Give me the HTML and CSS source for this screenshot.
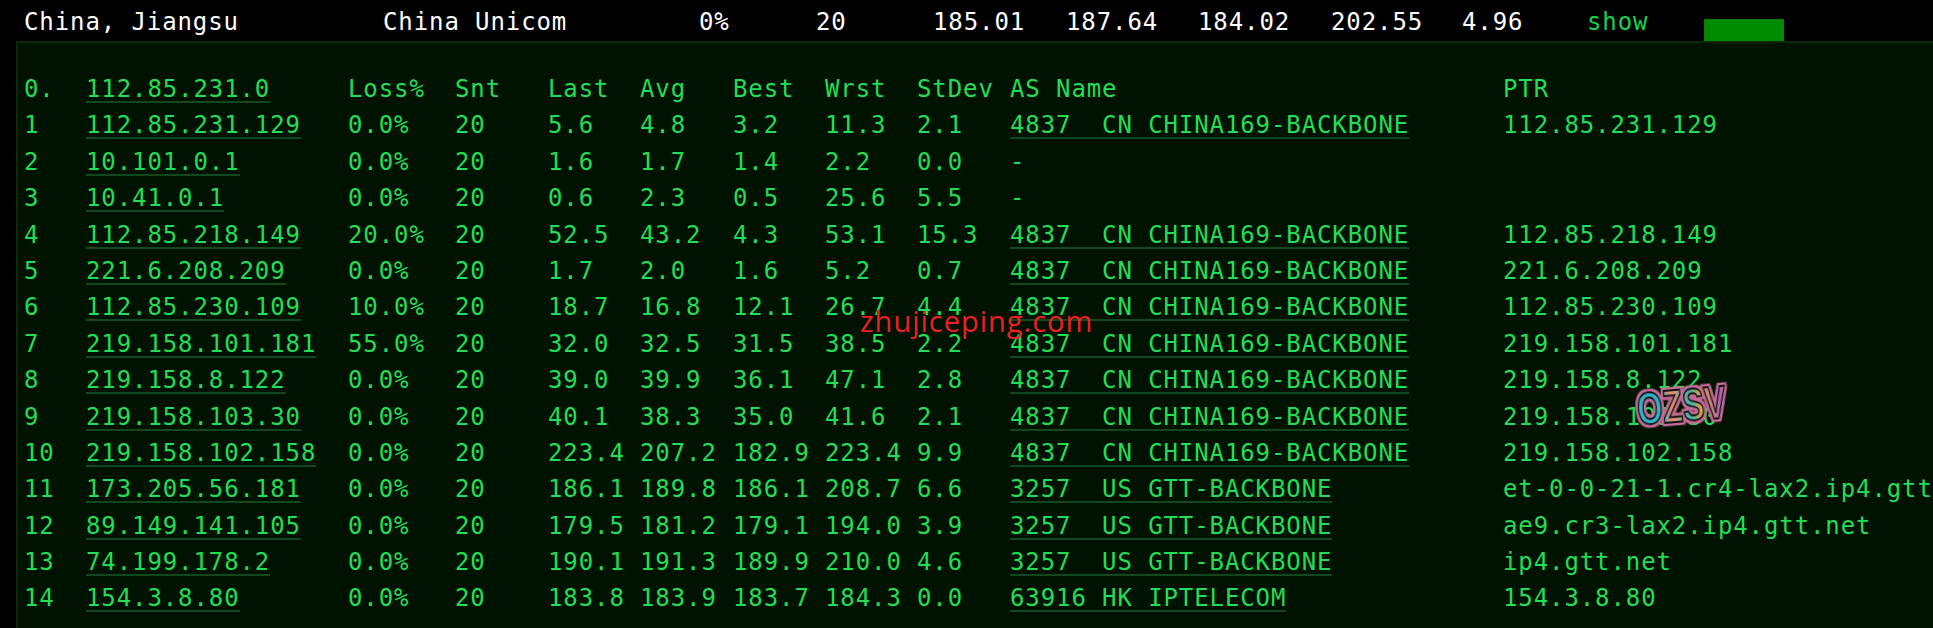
FILE: index.html
```html
<!DOCTYPE html>
<html lang="en">
<head>
<meta charset="utf-8">
<title>MTR trace</title>
<link rel="stylesheet" href="styles.css">
</head>
<body>
<div class="summary">
  <span>China, Jiangsu</span><span>China Unicom</span><span>0%</span><span>20</span><span>185.01</span><span>187.64</span><span>184.02</span><span>202.55</span><span>4.96</span><span class="show">show</span><span class="bar"></span>
</div>
<main class="panel">
  <div class="row"><span>0.</span><a>112.85.231.0</a><span>Loss%</span><span>Snt</span><span>Last</span><span>Avg</span><span>Best</span><span>Wrst</span><span>StDev</span><span>AS Name</span><span>PTR</span></div>
  <div class="row"><span>1</span><a>112.85.231.129</a><span>0.0%</span><span>20</span><span>5.6</span><span>4.8</span><span>3.2</span><span>11.3</span><span>2.1</span><a>4837&nbsp;&nbsp;CN CHINA169-BACKBONE</a><span>112.85.231.129</span></div>
  <div class="row"><span>2</span><a>10.101.0.1</a><span>0.0%</span><span>20</span><span>1.6</span><span>1.7</span><span>1.4</span><span>2.2</span><span>0.0</span><span>-</span><span></span></div>
  <div class="row"><span>3</span><a>10.41.0.1</a><span>0.0%</span><span>20</span><span>0.6</span><span>2.3</span><span>0.5</span><span>25.6</span><span>5.5</span><span>-</span><span></span></div>
  <div class="row"><span>4</span><a>112.85.218.149</a><span>20.0%</span><span>20</span><span>52.5</span><span>43.2</span><span>4.3</span><span>53.1</span><span>15.3</span><a>4837&nbsp;&nbsp;CN CHINA169-BACKBONE</a><span>112.85.218.149</span></div>
  <div class="row"><span>5</span><a>221.6.208.209</a><span>0.0%</span><span>20</span><span>1.7</span><span>2.0</span><span>1.6</span><span>5.2</span><span>0.7</span><a>4837&nbsp;&nbsp;CN CHINA169-BACKBONE</a><span>221.6.208.209</span></div>
  <div class="row"><span>6</span><a>112.85.230.109</a><span>10.0%</span><span>20</span><span>18.7</span><span>16.8</span><span>12.1</span><span>26.7</span><span>4.4</span><a>4837&nbsp;&nbsp;CN CHINA169-BACKBONE</a><span>112.85.230.109</span></div>
  <div class="row"><span>7</span><a>219.158.101.181</a><span>55.0%</span><span>20</span><span>32.0</span><span>32.5</span><span>31.5</span><span>38.5</span><span>2.2</span><a>4837&nbsp;&nbsp;CN CHINA169-BACKBONE</a><span>219.158.101.181</span></div>
  <div class="row"><span>8</span><a>219.158.8.122</a><span>0.0%</span><span>20</span><span>39.0</span><span>39.9</span><span>36.1</span><span>47.1</span><span>2.8</span><a>4837&nbsp;&nbsp;CN CHINA169-BACKBONE</a><span>219.158.8.122</span></div>
  <div class="row"><span>9</span><a>219.158.103.30</a><span>0.0%</span><span>20</span><span>40.1</span><span>38.3</span><span>35.0</span><span>41.6</span><span>2.1</span><a>4837&nbsp;&nbsp;CN CHINA169-BACKBONE</a><span>219.158.103.30</span></div>
  <div class="row"><span>10</span><a>219.158.102.158</a><span>0.0%</span><span>20</span><span>223.4</span><span>207.2</span><span>182.9</span><span>223.4</span><span>9.9</span><a>4837&nbsp;&nbsp;CN CHINA169-BACKBONE</a><span>219.158.102.158</span></div>
  <div class="row"><span>11</span><a>173.205.56.181</a><span>0.0%</span><span>20</span><span>186.1</span><span>189.8</span><span>186.1</span><span>208.7</span><span>6.6</span><a>3257&nbsp;&nbsp;US GTT-BACKBONE</a><span>et-0-0-21-1.cr4-lax2.ip4.gtt.net</span></div>
  <div class="row"><span>12</span><a>89.149.141.105</a><span>0.0%</span><span>20</span><span>179.5</span><span>181.2</span><span>179.1</span><span>194.0</span><span>3.9</span><a>3257&nbsp;&nbsp;US GTT-BACKBONE</a><span>ae9.cr3-lax2.ip4.gtt.net</span></div>
  <div class="row"><span>13</span><a>74.199.178.2</a><span>0.0%</span><span>20</span><span>190.1</span><span>191.3</span><span>189.9</span><span>210.0</span><span>4.6</span><a>3257&nbsp;&nbsp;US GTT-BACKBONE</a><span>ip4.gtt.net</span></div>
  <div class="row"><span>14</span><a>154.3.8.80</a><span>0.0%</span><span>20</span><span>183.8</span><span>183.9</span><span>183.7</span><span>184.3</span><span>0.0</span><a>63916 HK IPTELECOM</a><span>154.3.8.80</span></div>
  <div class="mark">zhujiceping.com</div>
  <div class="sticker"><span>OZSV</span></div>
</main>
</body>
</html>
```
FILE: styles.css
```css
* { box-sizing: border-box; }
html, body { margin: 0; height: 100%; overflow: hidden; }
body {
  background: #000;
  font-family: "DejaVu Sans Mono", "Liberation Mono", monospace;
  font-size: 24px;
  letter-spacing: 0.9px;
  white-space: nowrap;
}
.summary {
  height: 41px;
  padding: 7px 0 0 24px;
  display: grid;
  grid-template-columns: 359px 316px 117px 117px 133px 132px 133px 131px 125px 117px 80px;
  line-height: 30px;
  color: #fff;
}
.show { color: #16d24a; }
.bar { height: 22px; margin-top: 12px; background: #008c00; border: 1px solid #0a7a0a; border-bottom: 0; }
.panel {
  position: relative;
  margin-left: 16px;
  height: 587px;
  padding: 28px 0 0 6px;
  background: #001300;
  border-left: 2px solid #0e280e;
  border-top: 2px solid #0e280e;
  color: #22dd55;
  overflow: hidden;
}
.row {
  display: grid;
  grid-template-columns: 62px 262px 107px 93px 92px 93px 92px 92px 93px 493px 500px;
  height: 36.4px;
  line-height: 36.4px;
}
.row a {
  color: inherit;
  border-bottom: 2px solid #12481f;
  height: 32px;
  justify-self: start;
}
.mark {
  position: absolute;
  left: 842px;
  top: 260px;
  font-family: "Open Sans", sans-serif;
  font-weight: 500;
  font-size: 29px;
  line-height: 36px;
  letter-spacing: 1px;
  color: #f01f1f;
}
.sticker {
  position: absolute;
  left: 1612px;
  top: 341px;
  width: 100px;
  height: 44px;
  transform: rotate(-5deg) scale(0.86, 1.2);
}
.sticker span {
  display: block;
  font-family: "Liberation Sans", sans-serif;
  font-weight: 700;
  font-size: 38px;
  line-height: 44px;
  letter-spacing: 0;
  text-align: center;
  background: linear-gradient(90deg, #35b4c8 0%, #35b4c8 28%, #f08a6a 40%, #3fb6b0 62%, #e6a040 75%, #a860c8 100%);
  -webkit-background-clip: text;
  background-clip: text;
  color: transparent;
  -webkit-text-stroke: 1.5px #111;
  filter: drop-shadow(2px 0 0 #c86a9a) drop-shadow(-2px 0 0 #c86a9a) drop-shadow(0 2px 0 #c86a9a) drop-shadow(0 -2px 0 #c86a9a);
}
```
